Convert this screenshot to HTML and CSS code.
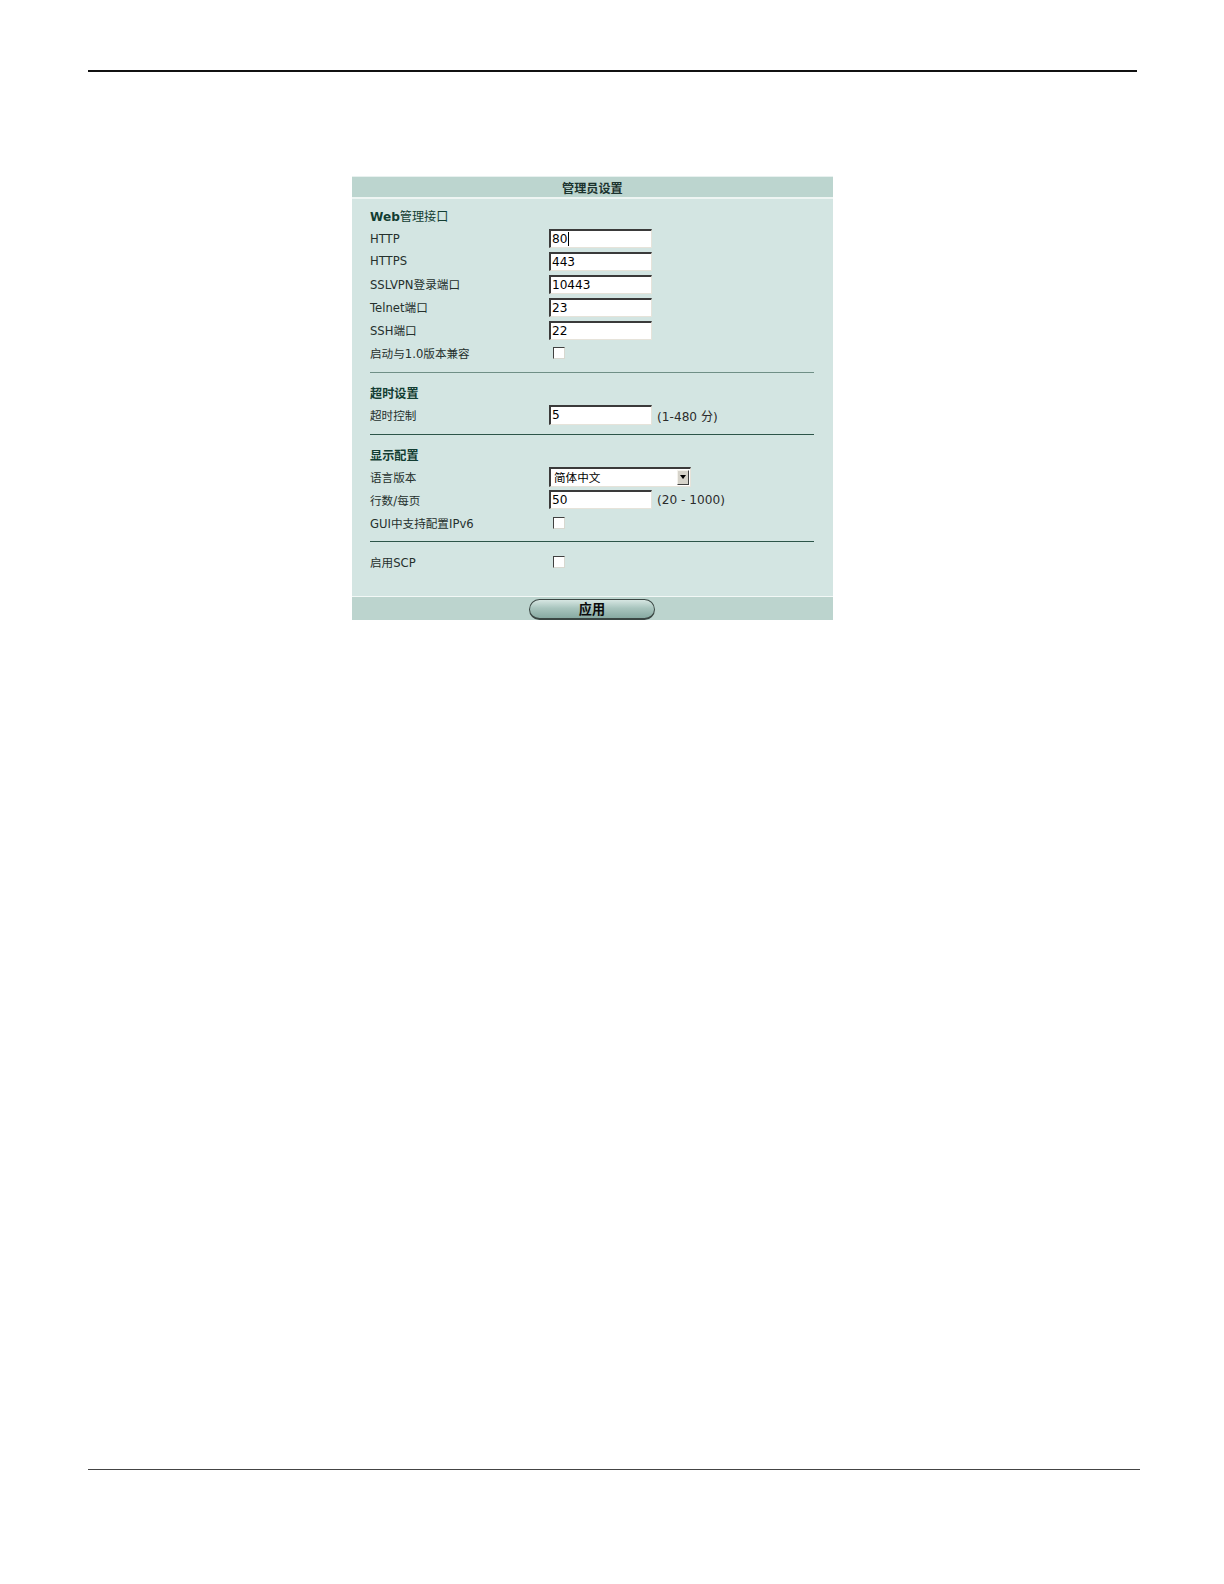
FILE: index.html
```html
<!DOCTYPE html>
<html lang="zh-CN">
<head>
<meta charset="utf-8">
<title>管理员设置</title>
<link rel="stylesheet" href="styles.css">
</head>
<body>
<div class="page">
<div class="rule-top"></div>
<div class="panel">
  <div class="panel-head">管理员设置</div>
  <div class="panel-body">
    <div class="section">
      <div class="row"><div class="heading plain"><b>Web</b>管理接口</div></div>
      <div class="row"><div class="label">HTTP</div><div class="field"><span>80</span><span class="caret"></span></div></div>
      <div class="row"><div class="label">HTTPS</div><div class="field"><span>443</span></div></div>
      <div class="row"><div class="label">SSLVPN登录端口</div><div class="field"><span>10443</span></div></div>
      <div class="row"><div class="label">Telnet端口</div><div class="field"><span>23</span></div></div>
      <div class="row"><div class="label">SSH端口</div><div class="field"><span>22</span></div></div>
      <div class="row"><div class="label">启动与1.0版本兼容</div><div class="check"></div></div>
    </div>
    <div class="divider light"></div>
    <div class="section">
      <div class="row"><div class="heading">超时设置</div></div>
      <div class="row"><div class="label">超时控制</div><div class="field"><span>5</span></div><div class="hint">(1-480 分)</div></div>
    </div>
    <div class="divider"></div>
    <div class="section">
      <div class="row"><div class="heading">显示配置</div></div>
      <div class="row"><div class="label">语言版本</div><div class="select"><span class="select-text">简体中文</span><span class="select-btn"><svg width="6" height="4" viewBox="0 0 6 4"><path d="M0 0h6L3 4z" fill="#000"/></svg></span></div></div>
      <div class="row"><div class="label">行数/每页</div><div class="field"><span>50</span></div><div class="hint">(20 - 1000)</div></div>
      <div class="row"><div class="label">GUI中支持配置IPv6</div><div class="check"></div></div>
    </div>
    <div class="divider"></div>
    <div class="section">
      <div class="row"><div class="label">启用SCP</div><div class="check"></div></div>
    </div>
  </div>
  <div class="panel-foot"><div class="btn">应用</div></div>
</div>
<div class="rule-bottom"></div>
</div>
</body>
</html>
```
FILE: styles.css
```css
html, body {
  margin: 0;
  padding: 0;
  background: #ffffff;
}
body {
  font-family: "DejaVu Sans", "Noto Sans CJK SC", sans-serif;
  font-size: 11.5px;
  color: #25302d;
}
.page {
  zoom: 1.011;
  padding-top: 69px;
}
.rule-top {
  margin-left: 87px;
  width: 1038px;
  height: 0;
  border-top: 2px solid #111;
}
.panel {
  margin-top: 103px;
  margin-left: 348px;
  width: 476px;
  background: #d3e5e2;
  border-top: 1px solid #e8f1ef;
}
.panel-head {
  box-sizing: border-box;
  height: 22px;
  padding-top: 2px;
  line-height: 21px;
  background: #bcd5cf;
  border-bottom: 2px solid #eef5f3;
  text-align: center;
  font-weight: bold;
  font-size: 12px;
  color: #1b332e;
}
.panel-body {
  padding: 5px 19px 22px 18px;
}
.row {
  display: flex;
  align-items: center;
  height: 22.67px;
}
.heading {
  font-weight: bold;
  color: #123d32;
  font-size: 12px;
}
.heading.plain {
  font-weight: normal;
}
.heading.plain b {
  font-weight: bold;
}
.label {
  width: 177px;
  flex: none;
  white-space: nowrap;
}
.field {
  box-sizing: border-box;
  width: 102px;
  height: 19px;
  background: #fff;
  border-top: 2px solid #3a3a3a;
  border-left: 2px solid #3a3a3a;
  border-right: 1px solid #e6e3da;
  border-bottom: 1px solid #e6e3da;
  display: flex;
  align-items: center;
  padding-left: 1px;
  font-size: 12px;
  color: #000;
}
.caret {
  display: inline-block;
  width: 1px;
  height: 14px;
  background: #000;
  margin-left: 1px;
}
.hint {
  margin-left: 5px;
  font-size: 12px;
  color: #2a2a2a;
}
.check {
  box-sizing: border-box;
  width: 12px;
  height: 12px;
  margin-left: 4px;
  background: #fff;
  border-top: 1px solid #404040;
  border-left: 1px solid #404040;
  border-right: 1px solid #d8d8d0;
  border-bottom: 1px solid #d8d8d0;
}
.select {
  box-sizing: border-box;
  width: 141px;
  height: 19px;
  background: #fff;
  border-top: 2px solid #3a3a3a;
  border-left: 2px solid #3a3a3a;
  border-right: 1px solid #e6e3da;
  border-bottom: 1px solid #e6e3da;
  display: flex;
  align-items: center;
  justify-content: space-between;
  font-size: 11.5px;
  color: #000;
}
.select-text {
  padding-left: 3px;
}
.select-btn {
  box-sizing: border-box;
  width: 12px;
  height: 15px;
  margin-right: 1px;
  background: #d6d3ca;
  border-top: 1px solid #f4f2ec;
  border-left: 1px solid #f4f2ec;
  border-right: 1px solid #404040;
  border-bottom: 1px solid #404040;
  display: flex;
  align-items: center;
  justify-content: center;
}
.divider {
  height: 0;
  border-top: 1px solid #2c5549;
  margin: 7px 0 8px;
}
.divider.light {
  border-top-color: #6f8f86;
}
.panel-foot {
  height: 23px;
  background: #bcd4ce;
  border-top: 1px solid #f2f8f6;
  display: flex;
  justify-content: center;
  align-items: flex-end;
}
.btn {
  box-sizing: border-box;
  width: 124px;
  height: 21px;
  margin-left: -1px;
  border: 1px solid #3b4744;
  border-bottom-width: 2px;
  border-radius: 11px;
  background: linear-gradient(to bottom, #d6e6e2 0%, #a9c5be 45%, #88aaa2 100%);
  text-align: center;
  font-weight: bold;
  font-size: 13px;
  line-height: 20px;
  color: #0b0b0b;
}
.rule-bottom {
  margin-top: 840px;
  margin-left: 87px;
  width: 1041px;
  height: 0;
  border-top: 1px solid #444;
}
```
